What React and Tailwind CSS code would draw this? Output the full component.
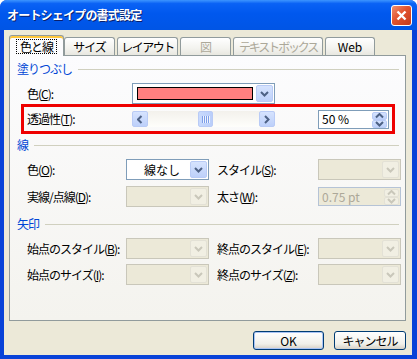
const F = "font-['Noto_Sans_CJK_JP',sans-serif]";
const L = 'whitespace-nowrap tracking-[-1px]';

function Arrow({ dir = 'down', color = '#4D6185' }) {
  const d = {
    down: 'M1 1 L4.5 4.5 L8 1',
    up: 'M1 4.5 L4.5 1 L8 4.5',
    left: 'M4.5 1 L1 4.5 L4.5 8',
    right: 'M1 1 L4.5 4.5 L1 8',
  }[dir];
  const vertical = dir === 'left' || dir === 'right';
  return (
    <svg width={vertical ? 6 : 9} height={vertical ? 9 : 6} viewBox={vertical ? '0 0 6 9' : '0 0 9 6'}>
      <path d={d} fill="none" stroke={color} strokeWidth="2" />
    </svg>
  );
}

function XPButton({ dir, disabled, className = '' }) {
  return (
    <div
      className={`flex items-center justify-center rounded-[2px] border ${
        disabled
          ? 'border-[#E3E1D6] bg-[#F1EFE3]'
          : 'border-[#B9CBF6] bg-[linear-gradient(to_bottom,#D6E3FE,#BDD0FA)]'
      } ${className}`}
    >
      <Arrow dir={dir} color={disabled ? '#C9C7BA' : '#4D6185'} />
    </div>
  );
}

function Combo({ w = 'w-[83px]', disabled, children }) {
  return (
    <div
      className={`${w} h-[21px] shrink-0 flex items-stretch p-[1px] border ${
        disabled ? 'border-[#C9C7BA] bg-[#ECE9D8]' : 'border-[#7F9DB9] bg-white'
      }`}
    >
      <div className="flex-1 flex items-center justify-center overflow-hidden">{children}</div>
      <XPButton dir="down" disabled={disabled} className="w-[17px]" />
    </div>
  );
}

function Spinner({ w, disabled, value }) {
  return (
    <div
      className={`${w} h-[19px] shrink-0 flex items-stretch p-[1px] border ${
        disabled ? 'border-[#B5C3D6] bg-[#ECE9D8]' : 'border-[#7F9DB9] bg-white'
      }`}
    >
      <div className={`flex-1 flex items-center pl-[2px] leading-none whitespace-nowrap ${disabled ? 'text-[#ACA899]' : 'text-black'}`}>
        {value}
      </div>
      <div className="w-[15px] flex flex-col">
        <XPButton dir="up" disabled={disabled} className="flex-1" />
        <XPButton dir="down" disabled={disabled} className="flex-1" />
      </div>
    </div>
  );
}

function Section({ title }) {
  return (
    <div className="h-[14px] flex items-center pl-[7px] pr-[6px]">
      <span className={`text-[#0046D5] leading-[14px] ${L}`}>{title}</span>
      <div className="flex-1 h-px bg-[#D0D0BF] ml-[6px]" />
    </div>
  );
}

function Tab({ label, w, disabled, tight = 'tracking-[-1px]' }) {
  return (
    <div
      className={`${w} h-[18px] mb-[1px] shrink-0 flex items-center justify-center whitespace-pre ${tight} border border-b-0 border-[#919B9C] rounded-t-[3px] bg-[linear-gradient(to_bottom,#FFFFFF,#F3F3EF_60%,#E8E7E0)] ${
        disabled ? 'text-[#ACA899]' : 'text-black'
      }`}
    >
      {label}
    </div>
  );
}

function Row({ children }) {
  return <div className="h-[21px] flex items-center pl-[17px]">{children}</div>;
}

export default function App() {
  return (
    <div className={`w-[417px] h-[359px] ${F} text-[12px] text-black bg-white`}>
      <div className="w-full h-full flex flex-col bg-[#0842D8] rounded-t-[7px] overflow-hidden">
        {/* title bar */}
        <div className="h-[30px] shrink-0 flex items-center justify-between pl-[7px] pr-[5px] bg-[linear-gradient(to_bottom,#3D95FF_0%,#0A62F5_12%,#0058EE_45%,#0055E5_100%)]">
          <span className="text-white font-bold text-[12px] tracking-[-0.8px] whitespace-nowrap [text-shadow:1px_1px_0_#0A1E6A]">
            オートシェイプの書式設定
          </span>
          <div className="w-[21px] h-[21px] rounded-[3px] border border-white flex items-center justify-center bg-[linear-gradient(135deg,#F09070,#E2532E_45%,#C43A1C)]">
            <svg width="11" height="11" viewBox="0 0 11 11">
              <path d="M1.5 1.5 L9.5 9.5 M9.5 1.5 L1.5 9.5" stroke="white" strokeWidth="2.4" />
            </svg>
          </div>
        </div>

        {/* client */}
        <div className="flex-1 ml-[4px] mr-[5px] mb-[4px] bg-[#ECE9D8] flex flex-col pt-[5px]">
          {/* tabs */}
          <div className="h-[21px] flex items-end pl-[5px] gap-[2px] relative z-10">
            <div className="w-[55px] h-[21px] mr-[-2px] shrink-0 flex items-center justify-center border border-b-0 border-[#919B9C] rounded-t-[3px] bg-[#FCFCFE] shadow-[inset_0_2px_0_#FFC83C]">
              <span className="px-[3px] leading-[13px] whitespace-nowrap tracking-[-1px] outline outline-1 outline-dotted outline-black">色と線</span>
            </div>
            <Tab label="サイズ" w="w-[51px]" />
            <Tab label="レイアウト" w="w-[61px]" tight="tracking-[-1.5px]" />
            <Tab label="図" w="w-[51px]" disabled />
            <Tab label="テキスト ボックス" w="w-[90px]" disabled tight="tracking-[-2.2px]" />
            <Tab label="Web" w="w-[50px]" tight="" />
          </div>

          {/* panel */}
          <div className="ml-[5px] mr-[6px] -mt-[1px] h-[266px] border border-[#919B9C] bg-[linear-gradient(to_bottom,#FCFCFE,#F4F3EE)] flex flex-col">
            <div className="mt-[6px]">
              <Section title="塗りつぶし" />
            </div>
            <div className="mt-[7px]">
              <Row>
                <span className={`w-[105px] ${L}`}>色(<u>C</u>):</span>
                <Combo w="w-[143px]">
                  <div className="w-full h-[13px] mx-[3px] border border-black bg-[#FF8080]" />
                </Combo>
              </Row>
            </div>
            <div className="ml-[11px] mr-[10px] h-[30px] border-[3px] border-[#EE0000] flex items-center pl-[3px]">
              <span className={`w-[105px] ${L}`}>透過性(<u>T</u>):</span>
              <div className="w-[143px] h-[16px] shrink-0 flex bg-[linear-gradient(to_bottom,#F3F1EC,#FEFEFB)]">
                <XPButton dir="left" className="w-[16px]" />
                <div className="flex-1 flex">
                  <div className="ml-[50px] w-[15px] h-[16px] rounded-[2px] border border-[#B9CBF6] bg-[linear-gradient(to_right,#C9DAFD,#BACEFA)] flex items-center justify-center">
                    <div className="w-px h-[7px] bg-[#7E9EE8]" />
                    <div className="w-px h-[7px] bg-[#EEF4FE]" />
                    <div className="w-px h-[7px] bg-[#7E9EE8]" />
                    <div className="w-px h-[7px] bg-[#EEF4FE]" />
                    <div className="w-px h-[7px] bg-[#7E9EE8]" />
                    <div className="w-px h-[7px] bg-[#EEF4FE]" />
                    <div className="w-px h-[7px] bg-[#7E9EE8]" />
                    <div className="w-px h-[7px] bg-[#EEF4FE]" />
                  </div>
                </div>
                <XPButton dir="right" className="w-[16px]" />
              </div>
              <div className="ml-[43px]">
                <Spinner w="w-[71px]" value="50 %" />
              </div>
            </div>

            <div className="mt-[4px]">
              <Section title="線" />
            </div>
            <div className="mt-[7px]">
              <Row>
                <span className={`w-[99px] ${L}`}>色(<u>O</u>):</span>
                <Combo>
                  <span className="pl-[6px] whitespace-nowrap">線なし</span>
                </Combo>
                <span className={`ml-[8px] w-[101px] ${L}`}>スタイル(<u>S</u>):</span>
                <Combo disabled />
              </Row>
            </div>
            <div className="mt-[6px]">
              <Row>
                <span className={`w-[99px] ${L}`}>実線/点線(<u>D</u>):</span>
                <Combo disabled />
                <span className={`ml-[8px] w-[101px] ${L}`}>太さ(<u>W</u>):</span>
                <Spinner w="w-[83px]" disabled value="0.75 pt" />
              </Row>
            </div>

            <div className="mt-[10px]">
              <Section title="矢印" />
            </div>
            <div className="mt-[7px]">
              <Row>
                <span className={`w-[99px] ${L}`}>始点のスタイル(<u>B</u>):</span>
                <Combo disabled />
                <span className={`ml-[8px] w-[101px] ${L}`}>終点のスタイル(<u>E</u>):</span>
                <Combo disabled />
              </Row>
            </div>
            <div className="mt-[5px]">
              <Row>
                <span className={`w-[99px] ${L}`}>始点のサイズ(<u>I</u>):</span>
                <Combo disabled />
                <span className={`ml-[8px] w-[101px] ${L}`}>終点のサイズ(<u>Z</u>):</span>
                <Combo disabled />
              </Row>
            </div>
          </div>

          {/* buttons */}
          <div className="mt-[10px] flex justify-end gap-[10px] mr-[6px]">
            <button className="w-[71px] h-[19px] rounded-[3px] border border-[#003C74] bg-[linear-gradient(to_bottom,#FFFFFF,#F0F0EA_70%,#D6D0C5)] shadow-[inset_0_0_0_1px_#A9C4F5] leading-none">
              OK
            </button>
            <button className="w-[72px] h-[19px] rounded-[3px] border border-[#003C74] bg-[linear-gradient(to_bottom,#FFFFFF,#F0F0EA_70%,#D6D0C5)] leading-none whitespace-nowrap tracking-[-1px]">
              キャンセル
            </button>
          </div>
        </div>
      </div>
    </div>
  );
}
